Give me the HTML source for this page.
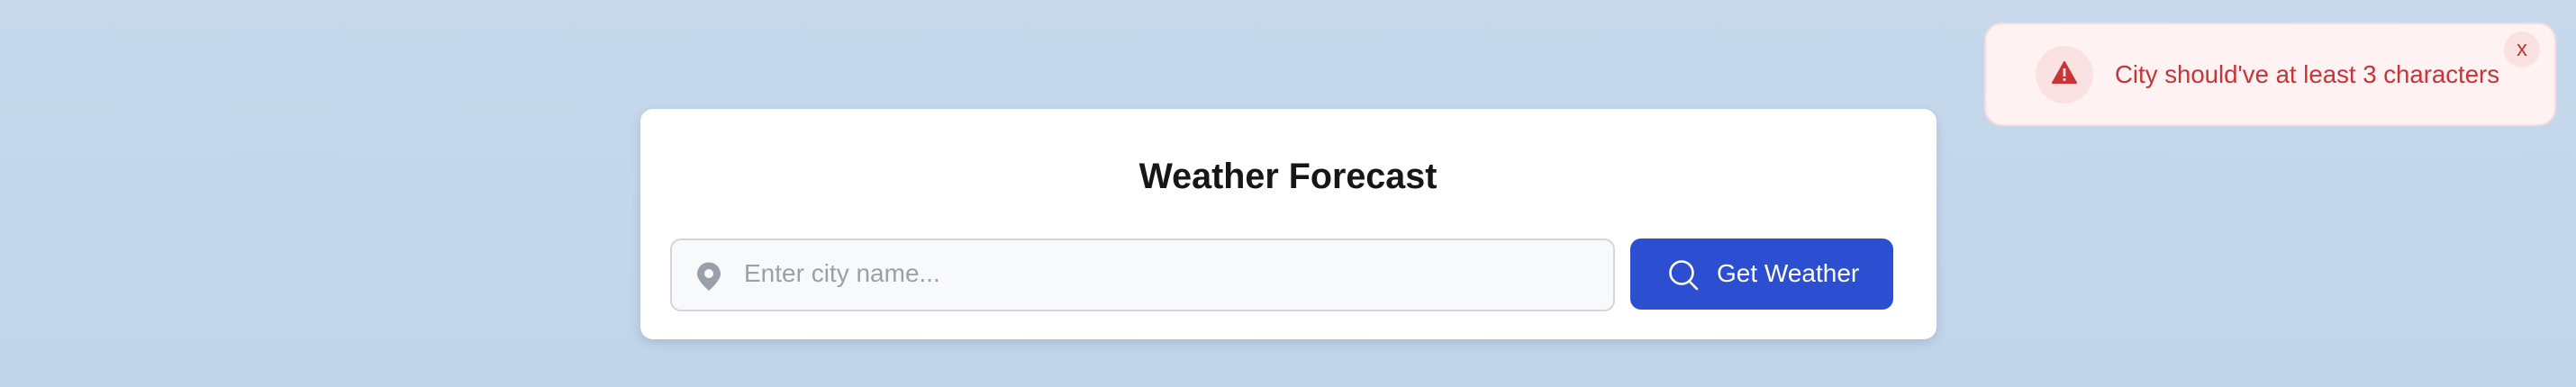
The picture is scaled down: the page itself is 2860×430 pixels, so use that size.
<!DOCTYPE html>
<html><head><meta charset="utf-8"><style>
html,body{margin:0;padding:0}
body{width:2860px;height:430px;overflow:hidden;background:linear-gradient(180deg,#c7d9eb,#c1d4ea);font-family:"Liberation Sans",Arial,sans-serif;position:relative}
.card{position:absolute;left:711px;top:121px;width:1439px;height:256px;background:#fff;border-radius:14px;box-shadow:0 4px 12px rgba(0,0,0,0.12)}
h1{position:absolute;left:0;right:0;top:173px;margin:0;text-align:center;font-size:39.5px;font-weight:bold;color:#161616;line-height:46px}
.input{position:absolute;left:744px;top:265px;width:1045px;height:77px;border:2px solid #d4d6dc;border-radius:12px;background:#f8f9fb}
.ph{position:absolute;left:826px;top:286px;font-size:28px;color:#9aa0aa;line-height:36px}
.btn{position:absolute;left:1810px;top:265px;width:292px;height:79px;background:#2b4fd0;border-radius:12px}
.bt{position:absolute;left:1906px;top:286px;font-size:28px;color:#fff;line-height:36px}
.toast{position:absolute;left:2203px;top:25px;width:635px;height:115px;background:#fef2f2;border:2px solid #fbdcdc;border-radius:20px;box-sizing:border-box}
.ic{position:absolute;left:2260px;top:51px;width:64px;height:64px;border-radius:50%;background:#fae2e2}
.tt{position:absolute;left:2348px;top:66px;font-size:27.6px;color:#c93434;line-height:34px}
.x{position:absolute;left:2780px;top:35px;width:40px;height:40px;border-radius:50%;background:#fae2e2;color:#c93434;font-size:24px;text-align:center;line-height:40px}
</style></head><body>
<div class="card"></div>
<h1>Weather Forecast</h1>
<div class="input"></div>
<svg style="position:absolute;left:772px;top:290px" width="30" height="34" viewBox="0 0 30 34"><path d="M15 1.5C7.5 1.5 2 7.5 2 14.5 2 22 15 33 15 33S28 22 28 14.5C28 7.5 22.5 1.5 15 1.5Z" fill="#9aa0aa"/><circle cx="15" cy="14" r="5" fill="#f8f9fb"/></svg>
<div class="ph">Enter city name...</div>
<div class="btn"></div>
<svg style="position:absolute;left:1850px;top:287px" width="40" height="38" viewBox="0 0 40 38"><circle cx="17" cy="16" r="12.5" fill="none" stroke="#fff" stroke-width="2.6"/><path d="M27 27L34 34" stroke="#fff" stroke-width="2.6" stroke-linecap="round"/></svg>
<div class="bt">Get Weather</div>
<div class="toast"></div>
<div class="ic"></div>
<svg style="position:absolute;left:2278px;top:68px" width="28" height="26" viewBox="0 0 28 26"><path d="M14 1L27 24H1Z" fill="#c93434" stroke="#c93434" stroke-width="2" stroke-linejoin="round"/><rect x="12.6" y="8" width="2.8" height="9" fill="#fae2e2"/><rect x="12.6" y="19" width="2.8" height="2.8" fill="#fae2e2"/></svg>
<div class="tt">City should've at least 3 characters</div>
<div class="x">x</div>
</body></html>
